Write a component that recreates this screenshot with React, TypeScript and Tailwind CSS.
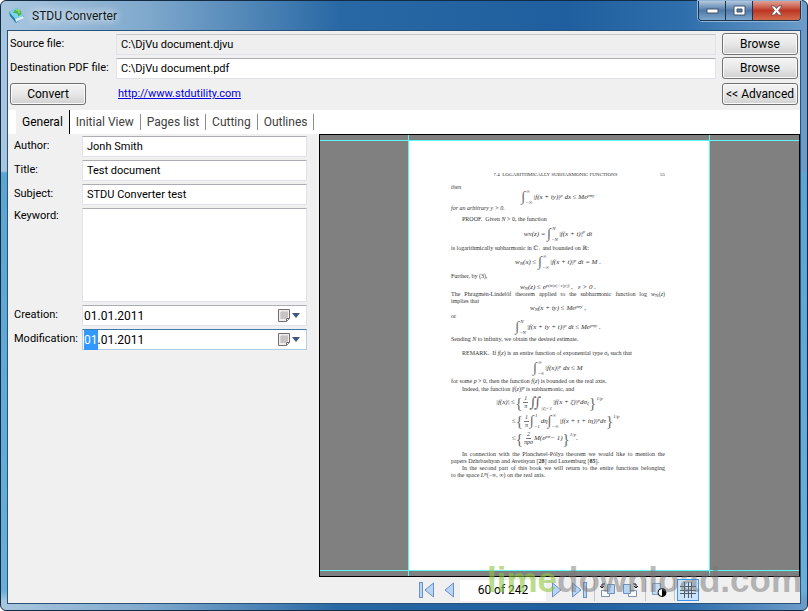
import { Fragment, type ReactNode } from "react";

const buttonClass =
  "h-[22px] w-[76px] shrink-0 whitespace-nowrap rounded-[3px] border border-[#707070] bg-linear-to-b from-[#f4f4f4] via-[#e8e8e8] to-[#d0d0d0] text-[12px] leading-4 text-black shadow-[inset_0_0_0_1px_#fafafa]";
const fieldClass =
  "h-[21px] w-full min-w-0 border border-[#e2e3ea] border-t-[#abadb3] bg-white px-1 text-[11px] leading-4 text-black outline-none";

function AppIcon() {
  return (
    <svg width="18" height="18" viewBox="0 0 18 18" aria-hidden="true">
      <path d="M1 5 L9 1 L16 10 L8 16 Z" fill="#2d87ad" />
      <path d="M1 5 L9 1 L15 9 L7 12 Z" fill="#7fd3ea" />
      <path d="M7 12 L15 9 L16 11 L8 15 Z" fill="#d9eef5" />
      <path d="M1 5 L7 12 L8 16 L2 9 Z" fill="#2b7fa8" />
      <path d="M5 6 C6 2 11 1 13 4 C14 7 12 9 10 9 C10 6 8 6 5 6 Z" fill="#4db553" />
      <path d="M8 3 L11 3 L11 6" fill="none" stroke="#b4ef7c" />
    </svg>
  );
}

const windowButtonClass =
  "flex w-[27px] items-center justify-center border-r border-[#1b3450] bg-linear-to-b from-[#b5c9df] via-[#5079a8] to-[#7ea7cc]";

function TitleBar() {
  return (
    <header className="flex h-[29px] shrink-0 items-start justify-between pl-[7px]">
      <div className="flex h-[29px] items-center gap-[6px]">
        <AppIcon />
        <h1 className="text-[12px] leading-4 text-[#101820] [text-shadow:0_0_8px_#fff,0_0_12px_#fff]">
          STDU Converter
        </h1>
      </div>
      <div className="mr-[6px] flex h-[20px] overflow-hidden rounded-b-[4px] border border-t-0 border-[#1b3450] shadow-[0_0_0_1px_#8fb4d6]">
        <button aria-label="Minimize" className={windowButtonClass}>
          <svg width="13" height="6" viewBox="0 0 13 6"><rect x="1" y="1" width="11" height="4" fill="#fff" stroke="#43536a" /></svg>
        </button>
        <button aria-label="Maximize" className={windowButtonClass}>
          <svg width="13" height="11" viewBox="0 0 13 11"><path fillRule="evenodd" d="M1 1H12V10H1ZM4 4H9V7H4Z" fill="#fff" stroke="#43536a" /></svg>
        </button>
        <button aria-label="Close" className="flex w-[47px] items-center justify-center bg-linear-to-b from-[#e0a297] via-[#bd3524] to-[#d36a4c]">
          <svg width="13" height="11" viewBox="0 0 13 11"><path d="M1 1H4.500L6.500 3.500L8.500 1H12L8.500 5.500L12 10H8.500L6.500 7.500L4.500 10H1L4.500 5.500Z" fill="#fff" stroke="#5c4a50" strokeWidth=".8" /></svg>
        </button>
      </div>
    </header>
  );
}

function FileRows() {
  return (
    <div className="grid grid-cols-[106px_1fr_76px] items-center gap-y-[2px] px-[2px] pt-[2px] pb-[5px]">
      <label htmlFor="source">Source file:</label>
      <div className="flex pr-[6px]">
        <input id="source" readOnly defaultValue="C:\DjVu document.djvu" className="h-[21px] w-full border border-[#e2e3ea] border-t-[#c4c6ca] bg-[#efefef] px-1 text-[11px] leading-4 text-black outline-none" />
      </div>
      <button className={buttonClass}>Browse</button>
      <label htmlFor="destination" className="whitespace-nowrap">Destination PDF file:</label>
      <div className="flex pr-[6px]">
        <input id="destination" defaultValue="C:\DjVu document.pdf" className={fieldClass} />
      </div>
      <button className={buttonClass}>Browse</button>
      <div className="flex pt-[2px]">
        <button className={buttonClass}>Convert</button>
      </div>
      <a href="http://www.stdutility.com" className="justify-self-start pt-[2px] pl-[2px] text-[#0000e0] underline">
        http://www.stdutility.com
      </a>
      <div className="flex pt-[2px]">
        <button className={buttonClass}>&lt;&lt; Advanced</button>
      </div>
    </div>
  );
}

const tabs = ["Initial View", "Pages list", "Cutting", "Outlines"];

function Tabs() {
  return (
    <nav role="tablist" className="flex h-[24px] shrink-0 items-center bg-white pl-2 text-[12px] leading-4">
      <button role="tab" aria-selected="true" className="h-full border-r border-black bg-[#f0f0f0] px-[6px] text-black">
        General
      </button>
      {tabs.map((tab) => (
        <button key={tab} role="tab" aria-selected="false" className="h-4 border-r border-[#8c8c8c] px-[6px] text-[#404040]">
          {tab}
        </button>
      ))}
    </nav>
  );
}

function DateField({ labelledBy, focused = false }: { labelledBy: string; focused?: boolean }) {
  return (
    <div
      role="group"
      aria-labelledby={labelledBy}
      className={
        focused
          ? "flex h-[21px] items-center border border-[#b5cfe7] border-t-[#3d7bad] bg-white pl-px text-[12px]"
          : "flex h-[21px] items-center border border-[#e2e3ea] border-t-[#abadb3] bg-white pl-px text-[12px]"
      }
    >
      <span className={focused ? "bg-[#3399ff] text-white" : ""}>01</span>
      <span className="flex-1">.01.2011</span>
      <button type="button" aria-label="Open calendar" className="mr-[6px] flex items-center gap-[2px]">
        <svg width="12" height="13" viewBox="0 0 12 13">
          <path d="M.5 .5H11.500V9.500L8.500 12.500H.5Z" fill="#f1eeee" stroke="#746d70" />
          <path d="M3 3H10M3 5H10M3 7H10M3 9H9M3 3V10M5 3V10M7 3V10M9 3V9" stroke="#aaa3a8" strokeWidth=".7" />
          <path d="M8.500 12V9.500H11" fill="#fff" stroke="#746d70" />
        </svg>
        <svg width="8" height="5" viewBox="0 0 8 5"><path d="M0 0H8L4 5Z" fill="#40547a" /></svg>
      </button>
    </div>
  );
}

function MetadataForm() {
  return (
    <form className="grid w-[311px] shrink-0 grid-cols-[68px_1fr] content-start gap-y-[3px] pt-[2px] pr-3 pl-[6px] leading-5">
      <label htmlFor="author">Author:</label>
      <input id="author" defaultValue="Jonh Smith" className={fieldClass} />
      <label htmlFor="title">Title:</label>
      <input id="title" defaultValue="Test document" className={fieldClass} />
      <label htmlFor="subject">Subject:</label>
      <input id="subject" defaultValue="STDU Converter test" className={fieldClass} />
      <label htmlFor="keyword" className="leading-4">Keyword:</label>
      <textarea id="keyword" className="h-[94px] resize-none border border-[#e2e3ea] border-t-[#abadb3] bg-white outline-none" />
      <span id="creation-label">Creation:</span>
      <DateField labelledBy="creation-label" />
      <span id="modification-label">Modification:</span>
      <DateField labelledBy="modification-label" focused />
    </form>
  );
}

function Sup({ children }: { children: ReactNode }) {
  return <span className="relative -top-[2px] text-[5px]">{children}</span>;
}

function Sub({ children }: { children: ReactNode }) {
  return <span className="relative top-px text-[5px]">{children}</span>;
}

function Integral({ from, to, sign = "∫" }: { from: string; to?: string; sign?: string }) {
  return (
    <span className="mr-px inline-flex h-[16px] items-center align-middle">
      <span className="text-[14px] leading-4 text-[#666] not-italic">{sign}</span>
      <span className="flex h-[16px] flex-col justify-between text-[5px] leading-[5px]">
        <span className="pl-px">{to}</span>
        <span>{from}</span>
      </span>
    </span>
  );
}

function Fraction({ top, bottom }: { top: string; bottom: string }) {
  return (
    <span className="mx-px inline-flex flex-col items-center align-middle text-[6px] leading-[7px]">
      <span className="border-b border-[#777] px-px">{top}</span>
      <span>{bottom}</span>
    </span>
  );
}

function Brace({ children }: { children: ReactNode }) {
  return <span className="text-[15px] leading-4 text-[#666] not-italic">{children}</span>;
}

const lineStyles = {
  text: "flex items-center whitespace-nowrap",
  indent: "flex items-center whitespace-nowrap pl-[11px]",
  full: "whitespace-nowrap [text-align-last:justify]",
  fullIndent: "whitespace-nowrap pl-[11px] [text-align-last:justify]",
  formula: "flex items-center justify-center whitespace-nowrap text-[7px] italic",
  first: "flex items-center whitespace-nowrap pl-[45px] text-[7px] italic",
  next: "flex items-center whitespace-nowrap pl-[61px] text-[7px] italic",
};

type Line = { kind: keyof typeof lineStyles; height: string; body: ReactNode };

const lines: Line[] = [
  { kind: "text", height: "h-2", body: <i>then</i> },
  { kind: "formula", height: "h-3", body: <span><Integral from="−∞" to="∞" />|f(x + iy)|<Sup>p</Sup> dx ≤ Me<Sup>pσy</Sup></span> },
  { kind: "text", height: "h-[10px]", body: <i>for an arbitrary y &gt; 0.</i> },
  { kind: "indent", height: "h-3", body: <span>PROOF.&nbsp; Given <i>N</i> &gt; 0, the function</span> },
  { kind: "formula", height: "h-[17px]", body: <span>w<Sub>N</Sub>(z) = <Integral from="−N" to="N" />|f(x + t)|<Sup>p</Sup> dt</span> },
  { kind: "text", height: "h-3", body: <span>is logarithmically subharmonic in ℂ<Sub>+</Sub> and bounded on ℝ:</span> },
  { kind: "formula", height: "h-4", body: <span>w<Sub>N</Sub>(x) ≤ <Integral from="−∞" to="∞" />|f(x + t)|<Sup>p</Sup> dt = M .</span> },
  { kind: "text", height: "h-[13px]", body: "Further, by (3)," },
  { kind: "formula", height: "h-2", body: <span>w<Sub>N</Sub>(z) ≤ e<Sup>p(σ|x|+ε|y|)</Sup> , &nbsp; ε &gt; 0 .</span> },
  { kind: "full", height: "h-[7px]", body: <span>The Phragmén-Lindelöf theorem applied to the subharmonic function log <i>w</i><Sub>N</Sub>(<i>z</i>)</span> },
  { kind: "text", height: "h-[7px]", body: "implies that" },
  { kind: "formula", height: "h-[7px]", body: <span>w<Sub>N</Sub>(x + iy) ≤ Me<Sup>pσy</Sup> ,</span> },
  { kind: "text", height: "h-[9px]", body: "or" },
  { kind: "formula", height: "h-3", body: <span><Integral from="−N" to="N" />|f(x + iy + t)|<Sup>p</Sup> dt ≤ Me<Sup>pσy</Sup> .</span> },
  { kind: "text", height: "h-[13px]", body: <span>Sending <i>N</i> to infinity, we obtain the desired estimate.</span> },
  { kind: "indent", height: "h-[14px]", body: <span>REMARK.&nbsp; If <i>f</i>(<i>z</i>) is an entire function of exponential type <i>σ</i><Sub>f</Sub> such that</span> },
  { kind: "formula", height: "h-4", body: <span><Integral from="−∞" to="∞" />|f(x)|<Sup>p</Sup> dx ≤ M</span> },
  { kind: "text", height: "h-[10px]", body: <span>for some <i>p</i> &gt; 0, then the function <i>f</i>(<i>z</i>) is bounded on the real axis.</span> },
  { kind: "indent", height: "h-[7px]", body: <span>Indeed, the function |<i>f</i>(<i>z</i>)|<Sup>p</Sup> is subharmonic, and</span> },
  { kind: "first", height: "h-[19px]", body: <span className="flex items-center">|f(x)| ≤ <Brace>{"{"}</Brace><Fraction top="1" bottom="π" /><Integral sign="∬" from="|ζ|<1" />|f(x + ζ)|<Sup>p</Sup> dσ<Sub>ζ</Sub><Brace>{"}"}</Brace><span className="self-start text-[5px]">1/p</span></span> },
  { kind: "next", height: "h-[18px]", body: <span className="flex items-center">≤ <Brace>{"{"}</Brace><Fraction top="1" bottom="π" /><Integral from="−1" to="1" /> dη <Integral from="−∞" to="∞" />|f(x + τ + iη)|<Sup>p</Sup> dτ<Brace>{"}"}</Brace><span className="self-start text-[5px]">1/p</span></span> },
  { kind: "next", height: "h-[17px]", body: <span className="flex items-center">≤ <Brace>{"{"}</Brace><Fraction top="2" bottom="πpσ" />M(e<Sup>pσ</Sup> − 1)<Brace>{"}"}</Brace><span className="self-start text-[5px]">1/p</span> .</span> },
  { kind: "fullIndent", height: "mt-1 h-[7px]", body: "In connection with the Plancherel-Pólya theorem we would like to mention the" },
  { kind: "text", height: "h-[7px]", body: <span>papers Dzhrbashyan and Avetisyan [<b>28</b>] and Luxemburg [<b>85</b>].</span> },
  { kind: "fullIndent", height: "h-[7px]", body: "In the second part of this book we will return to the entire functions belonging" },
  { kind: "text", height: "h-[7px]", body: <span>to the space <i>L</i><Sup>p</Sup>(−∞, ∞) on the real axis.</span> },
];

function DocumentPage() {
  return (
    <article className="h-full w-[302px] shrink-0 border-x border-[#5ff5f5] bg-white pt-7 pr-[44px] pl-[42px] font-['Liberation_Serif','DejaVu_Serif',serif] text-[6px] leading-[7px] text-[#333]">
      <div className="mb-1 flex h-[10px] items-center text-[5px]">
        <span className="flex-1 text-center">7.4&nbsp; LOGARITHMICALLY SUBHARMONIC FUNCTIONS</span>
        <span>55</span>
      </div>
      {lines.map((line, index) => (
        <Fragment key={index}>
          <div className={`${lineStyles[line.kind]} ${line.height}`}>{line.body}</div>
        </Fragment>
      ))}
    </article>
  );
}

function Preview() {
  return (
    <section aria-label="Preview" className="flex flex-1 flex-col border border-black bg-[#808080]">
      <div className="flex h-[5px] justify-center pr-px"><div className="w-[302px] border-x border-[#5ff5f5]" /></div>
      <div className="flex flex-1 justify-center border-y border-[#5ff5f5] pr-px"><DocumentPage /></div>
      <div className="flex h-[5px] justify-center pr-px"><div className="w-[302px] border-x border-[#5ff5f5]" /></div>
    </section>
  );
}

const toolClass = "flex h-[22px] w-[22px] shrink-0 items-center justify-center";

function Arrow({ label, bar, forward }: { label: string; bar?: boolean; forward?: boolean }) {
  return (
    <button aria-label={label} className={toolClass}>
      <svg width="16" height="16" viewBox="0 0 16 16" className={forward ? "rotate-180" : ""}>
        {bar && <rect x=".5" y=".5" width="3" height="15" fill="#b9d5f5" stroke="#6c8fc7" />}
        <path d={bar ? "M14.500 1V15L6 8Z" : "M12.500 1V15L4 8Z"} fill="#b9d5f5" stroke="#6c8fc7" strokeLinejoin="round" />
      </svg>
    </button>
  );
}

function RotateIcon({ mirrored }: { mirrored?: boolean }) {
  return (
    <svg width="16" height="16" viewBox="0 0 16 16" className={mirrored ? "-scale-x-100" : ""} aria-hidden="true">
      <path d="M1.500 8.500H9.500V14.500H1.500Z" fill="#f8fafc" stroke="#7f93ad" />
      <path d="M7.500 2.500H14.500V11.500H7.500Z" fill="#b5d5f2" stroke="#7193b9" />
      <path d="M2 5V2H5M0 4L2 6L4 4" fill="none" stroke="#111" />
    </svg>
  );
}

function Separator() {
  return <div className="mr-[2px] ml-1 h-[22px] border-l border-[#c5c5c5]" />;
}

function Toolbar() {
  return (
    <div className="flex h-[26px] shrink-0 items-center pl-[97px]">
      <Arrow label="First page" bar />
      <Arrow label="Previous page" />
      <input aria-label="Page" defaultValue="60 of 242" className="h-[21px] w-[86px] bg-white text-center text-[12px] text-black outline-none" />
      <Arrow label="Next page" forward />
      <Arrow label="Last page" bar forward />
      <Separator />
      <button aria-label="Rotate left" className={toolClass}><RotateIcon /></button>
      <button aria-label="Rotate right" className={toolClass}><RotateIcon mirrored /></button>
      <Separator />
      <button aria-label="Contrast" className={toolClass}>
        <svg width="16" height="16" viewBox="0 0 16 16"><path d="M1.500 1.500H9.500V12.500H1.500Z" fill="#c3dcf3" stroke="#7d9ec5" /><circle cx="11" cy="10.500" r="4" fill="#fff" stroke="#000" /><path d="M11 6.500A4 4 0 0 1 11 14.500Z" /></svg>
      </button>
      <Separator />
      <button aria-label="Crop grid" aria-pressed="true" className="flex h-[22px] w-[22px] items-center justify-center border border-[#3c93e8] bg-[#cce4fb]">
        <svg width="16" height="16" viewBox="0 0 16 16"><path d="M4.500 0V16M8.500 0V16M11.500 0V16M0 4.500H16M0 8.500H16M0 11.500H16" stroke="#4f5b69" /></svg>
      </button>
    </div>
  );
}

export default function App() {
  return (
    <div className="relative flex min-h-screen flex-col rounded-[6px] border border-[#132b43] bg-[linear-gradient(to_right,#a9c6df_0,#7fa9cd_18%,#2868a4_42%,#1f5f9f_70%,#2f6fac_85%,#6d9cc9_100%)] font-['Roboto','Noto_Sans',sans-serif] text-[11px] leading-4 text-black">
      <div className="flex flex-1 flex-col rounded-[6px] bg-[linear-gradient(to_bottom,transparent_170px,#5ba5d3_172px,#67afd8_590px,transparent_600px)] pb-[6px]">
        <TitleBar />
        <main className="mx-[6px] flex flex-1 flex-col border border-[#28527a] bg-[#f0f0f0]">
          <FileRows />
          <Tabs />
          <div className="flex flex-1">
            <MetadataForm />
            <div className="flex min-w-0 flex-1 flex-col">
              <Preview />
              <Toolbar />
            </div>
          </div>
        </main>
      </div>
      <div className="pointer-events-none absolute right-[5px] bottom-[10px] font-['Liberation_Sans',sans-serif] text-[35px] leading-10 font-bold text-[#77777780]">
        <span className="text-[#8dc63f99]">lime</span>download.com
      </div>
    </div>
  );
}
